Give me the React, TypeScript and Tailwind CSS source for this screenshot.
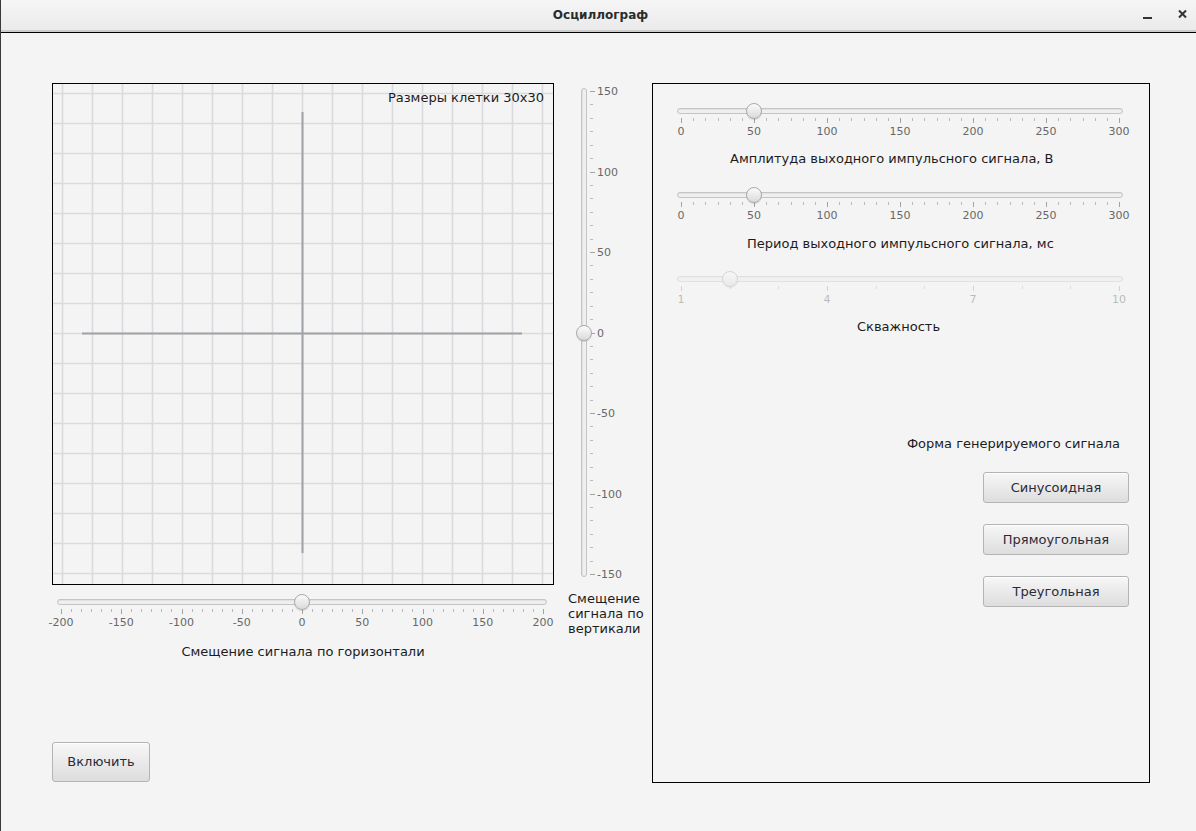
import React from "react";

const FONT = "font-['DejaVu_Sans','Noto_Sans',sans-serif]";

function ticksFor(min: number, max: number, major: number, minorCount: number) {
  const majors: number[] = [];
  const minors: number[] = [];
  for (let v = min; v <= max + 1e-6; v += major) {
    majors.push(v);
    if (v + major <= max + 1e-6) {
      for (let k = 1; k <= minorCount; k++) minors.push(v + (k * major) / (minorCount + 1));
    }
  }
  return { majors, minors };
}

function HSlider({
  width,
  min,
  max,
  value,
  major,
  minorCount,
  disabled,
}: {
  width: number;
  min: number;
  max: number;
  value: number;
  major: number;
  minorCount: number;
  disabled?: boolean;
}) {
  const p = 4;
  const pos = (v: number) => p + ((v - min) / (max - min)) * (width - 2 * p);
  const { majors, minors } = ticksFor(min, max, major, minorCount);
  return (
    <div className={`relative h-[34px] ${disabled ? "opacity-40" : ""}`} style={{ width }}>
      <div className="absolute left-0 right-0 top-[5px] h-[6px] rounded-full border border-[#c4c4c4] bg-[#efefef] shadow-[inset_0_1px_1px_rgba(0,0,0,0.06)]" />
      <svg className="absolute left-0 top-[15px]" width={width} height={6}>
        {minors.map((v, i) => (
          <line key={"m" + i} x1={Math.round(pos(v)) + 0.5} x2={Math.round(pos(v)) + 0.5} y1={0} y2={3} stroke="#b9b9b9" strokeWidth={1} />
        ))}
        {majors.map((v, i) => (
          <line key={"M" + i} x1={Math.round(pos(v)) + 0.5} x2={Math.round(pos(v)) + 0.5} y1={0} y2={5} stroke="#a3a3a3" strokeWidth={1} />
        ))}
      </svg>
      {majors.map((v, i) => (
        <span
          key={"l" + i}
          className="absolute top-[22px] -translate-x-1/2 whitespace-nowrap text-[11px] leading-[14px] text-[#686868]"
          style={{ left: pos(v) }}
        >
          {Math.round(v)}
        </span>
      ))}
      <div
        className="absolute top-0 h-4 w-4 rounded-full border border-[#a9a9a9] bg-linear-to-b from-[#fbfbfb] to-[#dadada] shadow-[0_1px_1px_rgba(0,0,0,0.12)]"
        style={{ left: pos(value) - 8 }}
      />
    </div>
  );
}

function VSlider({
  height,
  min,
  max,
  value,
  major,
  minorCount,
}: {
  height: number;
  min: number;
  max: number;
  value: number;
  major: number;
  minorCount: number;
}) {
  const p = 3;
  const pos = (v: number) => p + ((max - v) / (max - min)) * (height - 2 * p);
  const { majors, minors } = ticksFor(min, max, major, minorCount);
  return (
    <div className="relative w-[60px]" style={{ height }}>
      <div className="absolute bottom-0 left-[6px] top-0 w-[6px] rounded-full border border-[#c4c4c4] bg-[#efefef] shadow-[inset_1px_0_1px_rgba(0,0,0,0.06)]" />
      <svg className="absolute left-[15px] top-0" width={6} height={height}>
        {minors.map((v, i) => (
          <line key={"m" + i} y1={Math.round(pos(v)) + 0.5} y2={Math.round(pos(v)) + 0.5} x1={0} x2={3} stroke="#b9b9b9" strokeWidth={1} />
        ))}
        {majors.map((v, i) => (
          <line key={"M" + i} y1={Math.round(pos(v)) + 0.5} y2={Math.round(pos(v)) + 0.5} x1={0} x2={5} stroke="#a3a3a3" strokeWidth={1} />
        ))}
      </svg>
      {majors.map((v, i) => (
        <span
          key={"l" + i}
          className="absolute left-[22px] -translate-y-1/2 whitespace-nowrap text-[11px] leading-[14px] text-[#686868]"
          style={{ top: pos(v) + 1 }}
        >
          {Math.round(v)}
        </span>
      ))}
      <div
        className="absolute left-[1px] h-4 w-4 rounded-full border border-[#a9a9a9] bg-linear-to-b from-[#fbfbfb] to-[#dadada] shadow-[0_1px_1px_rgba(0,0,0,0.12)]"
        style={{ top: pos(value) - 8 }}
      />
    </div>
  );
}

function Scope() {
  const lines: number[] = [];
  for (let i = 0; i <= 16; i++) lines.push(9 + i * 30);
  return (
    <div className="relative h-[502px] w-[502px] border border-black">
      <svg width={500} height={500} className="block">
        {lines.map((x) => (
          <line key={"v" + x} x1={x + 0.5} x2={x + 0.5} y1={0} y2={500} stroke="#d9dbde" strokeWidth={1.6} />
        ))}
        {lines.map((y) => (
          <line key={"h" + y} y1={y + 0.5} y2={y + 0.5} x1={0} x2={500} stroke="#d9dbde" strokeWidth={1.6} />
        ))}
        <line x1={249.5} x2={249.5} y1={28} y2={469} stroke="#9ea1a5" strokeWidth={2} />
        <line x1={29} x2={469} y1={249.5} y2={249.5} stroke="#9ea1a5" strokeWidth={2} />
      </svg>
      <div className="absolute right-[9px] top-[6px] text-[13px] leading-[16px] text-[#1c1c1c]">Размеры клетки 30x30</div>
    </div>
  );
}

function Btn({ children, className }: { children: React.ReactNode; className: string }) {
  return (
    <button
      className={`flex items-center justify-center rounded-[3px] border border-[#b4b4b4] bg-linear-to-b from-[#f7f7f7] to-[#dddddd] text-[13px] text-[#2a2a3a] shadow-[inset_0_1px_0_rgba(255,255,255,0.8)] ${className}`}
    >
      {children}
    </button>
  );
}

export default function App() {
  return (
    <div className={`h-[831px] w-[1196px] overflow-hidden border-l border-[#3a3a3a] bg-[#f4f4f4] ${FONT}`}>
      {/* title bar */}
      <div className="relative flex h-[30px] items-center justify-center bg-linear-to-b from-[#f6f6f6] to-[#eaeaea]">
        <span className="ml-[4px] text-[12px] font-bold text-[#2b2b2b]">Осциллограф</span>
        <div className="absolute right-[9px] top-0 flex h-[30px] items-center gap-[26px]">
          <svg width={9} height={12} viewBox="0 0 9 12">
            <rect x={0} y={8} width={9} height={2} fill="#333" />
          </svg>
          <svg width={9} height={12} viewBox="0 0 9 12">
            <path d="M1 1.5 L8 8.5 M8 1.5 L1 8.5" stroke="#333" strokeWidth={2} />
          </svg>
        </div>
      </div>
      <div className="h-[2px] bg-[#cdcdcd]" />
      <div className="h-[1px] bg-black" />

      {/* content */}
      <div className="flex h-[798px]">
        {/* left column */}
        <div className="w-[651px] pl-[51px] pt-[50px]">
          <div className="flex items-start">
            <Scope />
            <div className="ml-[21px] mt-[5px]">
              <VSlider height={489} min={-150} max={150} value={0} major={50} minorCount={5} />
            </div>
          </div>
          <div className="flex items-start">
            <div className="w-[502px]">
              <div className="ml-[5px] mt-[9px]">
                <HSlider width={490} min={-200} max={200} value={0} major={50} minorCount={5} />
              </div>
              <div className="mt-[16px] text-center text-[13px] leading-[16px] text-[#1c1c1c]">
                Смещение сигнала по горизонтали
              </div>
            </div>
            <div className="ml-[14px] mt-[6px] text-[13px] leading-[15px] text-[#1c1c1c]">
              Смещение
              <br />
              сигнала по
              <br />
              вертикали
            </div>
          </div>
          <Btn className="mt-[82px] h-[40px] w-[98px]">Включить</Btn>
        </div>

        {/* right panel */}
        <div className="mt-[50px] h-[700px] w-[498px] border border-black pt-[19px]">
          <div className="ml-[24px]">
            <HSlider width={446} min={0} max={300} value={50} major={50} minorCount={5} />
          </div>
          <div className="ml-[77px] mt-[14px] text-[13px] leading-[16px] text-[#1c1c1c]">
            Амплитуда выходного импульсного сигнала, В
          </div>
          <div className="ml-[24px] mt-[20px]">
            <HSlider width={446} min={0} max={300} value={50} major={50} minorCount={5} />
          </div>
          <div className="ml-[94px] mt-[15px] text-[13px] leading-[16px] text-[#1c1c1c]">
            Период выходного импульсного сигнала, мс
          </div>
          <div className="ml-[24px] mt-[19px]">
            <HSlider width={446} min={1} max={10} value={2} major={3} minorCount={2} disabled />
          </div>
          <div className="ml-[204px] mt-[14px] text-[13px] leading-[16px] text-[#1c1c1c]">Скважность</div>
          <div className="mr-[29px] mt-[101px] text-right text-[13px] leading-[16px] text-[#1c1c1c]">
            Форма генерируемого сигнала
          </div>
          <div className="ml-[330px] mt-[20px] flex flex-col gap-[21px]">
            <Btn className="h-[31px] w-[146px]">Синусоидная</Btn>
            <Btn className="h-[31px] w-[146px]">Прямоугольная</Btn>
            <Btn className="h-[31px] w-[146px]">Треугольная</Btn>
          </div>
        </div>
      </div>
    </div>
  );
}
